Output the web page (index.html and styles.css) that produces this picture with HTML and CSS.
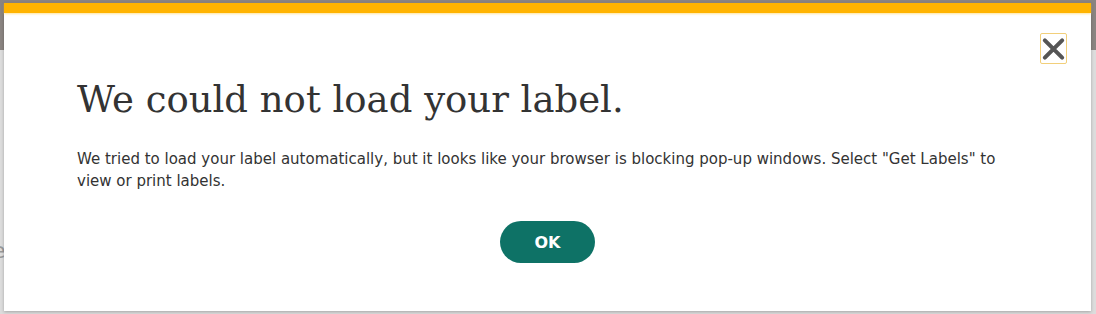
FILE: index.html
```html
<!DOCTYPE html>
<html lang="en">
<head>
<meta charset="utf-8">
<title>Label error</title>
<link rel="stylesheet" href="styles.css">
</head>
<body>
<div class="backdrop">
  <span class="bg-letter">e</span>
</div>
<div class="modal" role="dialog" aria-labelledby="modal-title">
  <div class="modal-bar"></div>
  <div class="modal-head">
    <button class="close" aria-label="Close">
      <svg width="26" height="26" viewBox="0 0 26 26" aria-hidden="true">
        <path d="M4 4 L22 22 M22 4 L4 22" stroke="#555" stroke-width="4.2" stroke-linecap="round" fill="none"/>
      </svg>
    </button>
  </div>
  <div class="modal-body">
    <h1 id="modal-title" class="title">We could not load your label.</h1>
    <p class="message">We tried to load your label automatically, but it looks like your browser is blocking pop-up windows. Select "Get Labels" to view or print labels.</p>
    <div class="actions">
      <button class="ok">OK</button>
    </div>
  </div>
</div>
</body>
</html>
```
FILE: styles.css
```css
html, body {
  margin: 0;
  padding: 0;
}
body {
  width: 1096px;
  height: 314px;
  overflow: hidden;
  position: relative;
  background: linear-gradient(to bottom, #8a8481 0, #8a8481 50px, #dcdcdc 50px, #dcdcdc 100%);
  font-family: "DejaVu Sans", Verdana, sans-serif;
}
.backdrop {
  position: absolute;
  inset: 0;
}
.bg-letter {
  position: absolute;
  left: -8px;
  top: 238px;
  font-family: "DejaVu Sans", sans-serif;
  font-size: 22px;
  color: #999;
}
.modal {
  position: absolute;
  left: 4px;
  top: 3px;
  width: 1087px;
  height: 308px;
  background: #fff;
  box-shadow: 0 1px 3px rgba(0,0,0,0.25);
  display: flex;
  flex-direction: column;
}
.modal-bar {
  height: 10px;
  background: #ffb300;
  box-shadow: 0 1px 2px rgba(255, 210, 90, 0.6);
}
.modal-head {
  display: flex;
  justify-content: flex-end;
  padding: 20px 24px 0 0;
}
.close {
  width: 27px;
  height: 31px;
  padding: 0;
  margin: 0;
  background: #fff;
  border: 1px solid #f2cf7a;
  border-radius: 2px;
  display: flex;
  align-items: center;
  justify-content: center;
  cursor: pointer;
}
.modal-body {
  padding: 0 73px;
}
.title {
  margin: 14px 0 0 0;
  font-family: "DejaVu Serif", Georgia, serif;
  font-weight: normal;
  font-size: 37px;
  line-height: 44px;
  color: #333;
}
.message {
  margin: 26px 0 0 0;
  font-size: 15px;
  line-height: 22px;
  color: #333;
}
.actions {
  display: flex;
  justify-content: center;
  margin-top: 29px;
}
.ok {
  width: 95px;
  height: 42px;
  border: none;
  border-radius: 21px;
  background: #0e7266;
  color: #fff;
  font-family: "DejaVu Sans", Verdana, sans-serif;
  font-weight: bold;
  font-size: 16px;
  cursor: pointer;
}
```
